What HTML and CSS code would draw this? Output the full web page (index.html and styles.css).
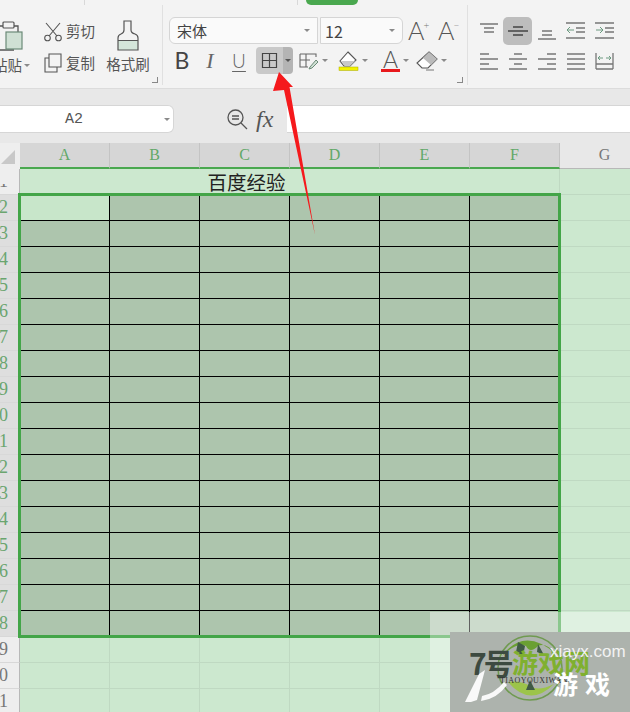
FILE: index.html
```html
<!DOCTYPE html>
<html lang="zh">
<head>
<meta charset="utf-8">
<title>表格</title>
<link rel="stylesheet" href="styles.css">
</head>
<body>
<div class="app">
  <div class="tabs">
    <span class="tab-line tl1"></span><span class="tab-line tl2"></span><span class="tab-pill"></span>
  </div>
  <div class="ribbon">
    <section class="grp clip">
      <div class="paste">
        <svg class="paste-ico" width="33" height="31" viewBox="0 0 33 31"><path d="M4 6h20v9M20 30H4V6" fill="none" stroke="#555" stroke-width="1.3"/><rect x="9" y="2" width="11" height="6" rx="1" fill="#f3f3f3" stroke="#555" stroke-width="1.2"/><rect x="12" y="12" width="16" height="17" fill="#cfe0d4" stroke="#6c8a78" stroke-width="1.2"/></svg>
        <div class="lbl paste-lbl">粘贴<i class="caret"></i></div>
      </div>
      <div class="cutcopy">
        <div class="cc-row">
          <svg width="20" height="20" viewBox="0 0 20 20"><path d="M3 1l11 13M17 1L6 14" stroke="#555" stroke-width="1.1" fill="none"/><circle cx="4.500" cy="16" r="2.800" fill="none" stroke="#555" stroke-width="1.100"/><circle cx="15.500" cy="16" r="2.800" fill="none" stroke="#555" stroke-width="1.100"/></svg>
          <span class="lbl">剪切</span>
        </div>
        <div class="cc-row">
          <svg width="20" height="20" viewBox="0 0 20 20"><path d="M6 1h12v13H6zM6 5H2v14h12v-5" fill="none" stroke="#555" stroke-width="1.100"/></svg>
          <span class="lbl">复制</span>
        </div>
      </div>
      <div class="painter">
        <svg width="24" height="31" viewBox="0 0 24 31"><path d="M2 20.500h20v9.500H2z" fill="#d4e6da"/><path d="M8 1h7v9q0 3 4 4 3 1 3 4v12H2V18q0-3 3-4 3-1 3-4zM2 20.500h20" fill="none" stroke="#555" stroke-width="1.200"/></svg>
        <div class="lbl">格式刷</div>
      </div>
      <i class="corner"></i>
    </section>

    <section class="grp font">
      <div class="f-row1">
        <div class="combo font-name"><span>宋体</span><i class="caret"></i></div>
        <div class="combo font-size"><span>12</span><i class="caret"></i></div>
        <span class="grow">A<sup>+</sup></span>
        <span class="grow">A<sup class="minus">−</sup></span>
      </div>
      <div class="f-row2">
        <span class="sty bold">B</span>
        <span class="sty ital">I</span>
        <span class="sty under">U</span>
        <div class="border-btn">
          <span class="bb-main"><svg width="17" height="17" viewBox="0 0 17 17"><path d="M1.500 1.500h14v14h-14zM8.500 1.500v14M1.500 8.500h14" fill="none" stroke="#444" stroke-width="1.200"/></svg></span>
          <span class="bb-drop"><i class="caret dark"></i></span>
        </div>
        <span class="tool t-cond"><svg width="20" height="18" viewBox="0 0 20 18"><path d="M1 2h16v3M1 2v13h8M1 8h10M7 2v13" fill="none" stroke="#666" stroke-width="1.100"/><path d="M11 15l6-7 2 2-6 6-3 1z" fill="#cfe0d4" stroke="#6c8a78"/></svg><i class="caret"></i></span>
        <span class="tool t-fill"><svg width="21" height="20" viewBox="0 0 21 20"><path d="M10 1l8 8-6 6H6L2 10z" fill="#fff" stroke="#555" stroke-width="1.100"/><path d="M3 10h14l-5 5H7z" fill="#c8c8c8"/><rect x="1" y="16" width="19" height="3.500" fill="#f2f200" stroke="#a8a800" stroke-width=".5"/></svg><i class="caret"></i></span>
        <span class="tool t-color"><span class="font-a">A</span><i class="caret"></i></span>
        <span class="tool t-erase"><svg width="22" height="20" viewBox="0 0 22 20"><path d="M13 1l8 7-9 9H6l-5-5z" fill="#fff" stroke="#555" stroke-width="1.100"/><path d="M13 1l8 7-6 6-8-7z" fill="#bbb"/><path d="M10 19h8" stroke="#777"/></svg><i class="caret"></i></span>
      </div>
      <i class="corner"></i>
    </section>

    <section class="grp align">
      <div class="a-row">
        <span class="ab"><svg width="18" height="18" viewBox="0 0 18 18"><path d="M0 2h18M4 6h10M4 10h10" stroke="#777" stroke-width="1.300"/></svg></span>
        <span class="ab on"><svg width="20" height="18" viewBox="0 0 20 18"><path d="M0 9h20M5 5h10M5 13h10" stroke="#444" stroke-width="1.300"/></svg></span>
        <span class="ab"><svg width="18" height="18" viewBox="0 0 18 18"><path d="M4 9h10M4 13h10M0 17h18" stroke="#777" stroke-width="1.300"/></svg></span>
        <span class="ab"><svg width="19" height="18" viewBox="0 0 19 18"><path d="M0 1h19M10 6h9M10 10h9M0 16h19" stroke="#777" stroke-width="1.300"/><path d="M8 8H1M4 5L1 8l3 3" fill="none" stroke="#6c9a80"/></svg></span>
        <span class="ab"><svg width="19" height="18" viewBox="0 0 19 18"><path d="M0 1h19M10 6h9M10 10h9M0 16h19" stroke="#777" stroke-width="1.300"/><path d="M1 8h7M5 5l3 3-3 3" fill="none" stroke="#6c9a80"/></svg></span>
      </div>
      <div class="a-row">
        <span class="ab"><svg width="18" height="18" viewBox="0 0 18 18"><path d="M0 2h9M0 7h18M0 12h9M0 17h18" stroke="#777" stroke-width="1.300"/></svg></span>
        <span class="ab"><svg width="18" height="18" viewBox="0 0 18 18"><path d="M5 2h8M0 7h18M5 12h8M0 17h18" stroke="#777" stroke-width="1.300"/></svg></span>
        <span class="ab"><svg width="18" height="18" viewBox="0 0 18 18"><path d="M9 2h9M0 7h18M9 12h9M0 17h18" stroke="#777" stroke-width="1.300"/></svg></span>
        <span class="ab"><svg width="18" height="18" viewBox="0 0 18 18"><path d="M0 2h18M0 7h18M0 12h18M0 17h18" stroke="#777" stroke-width="1.300"/></svg></span>
        <span class="ab"><svg width="19" height="18" viewBox="0 0 19 18"><path d="M1 1v16M18 1v16M1 12h17M1 17h17" stroke="#777" stroke-width="1.300"/><path d="M3 6h5M5 4L3 6l2 2M11 6h5M14 4l2 2-2 2" fill="none" stroke="#6c9a80"/></svg></span>
      </div>
    </section>
  </div>

  <div class="fbar">
    <div class="namebox"><span>A2</span><i class="caret"></i></div>
    <svg class="zoom-ico" width="22" height="22" viewBox="0 0 22 22"><circle cx="9.500" cy="9.500" r="7.500" fill="none" stroke="#555" stroke-width="1.300"/><path d="M15 15l6 6M6 8h7M6 11h7" stroke="#555" stroke-width="1.300"/></svg>
    <span class="fx">fx</span>
    <div class="finput"></div>
  </div>

  <div class="sheet">
    <div class="row head">
      <div class="rh corner-cell"><i class="tri"></i></div>
      <div class="ch">A</div><div class="ch">B</div><div class="ch">C</div><div class="ch">D</div><div class="ch">E</div><div class="ch">F</div><div class="ch last">G</div>
    </div>
    <div class="row r1">
      <div class="rh"><span class="clipped">1</span></div>
      <div class="title">百度经验</div>
      <div class="c"></div><div class="c wide"></div>
    </div>
    <div class="row"><div class="rh on">2</div><div class="t active"></div><div class="t"></div><div class="t"></div><div class="t"></div><div class="t"></div><div class="t"></div><div class="c wide"></div></div>
    <div class="row"><div class="rh on">3</div><div class="t"></div><div class="t"></div><div class="t"></div><div class="t"></div><div class="t"></div><div class="t"></div><div class="c wide"></div></div>
    <div class="row"><div class="rh on">4</div><div class="t"></div><div class="t"></div><div class="t"></div><div class="t"></div><div class="t"></div><div class="t"></div><div class="c wide"></div></div>
    <div class="row"><div class="rh on">5</div><div class="t"></div><div class="t"></div><div class="t"></div><div class="t"></div><div class="t"></div><div class="t"></div><div class="c wide"></div></div>
    <div class="row"><div class="rh on">6</div><div class="t"></div><div class="t"></div><div class="t"></div><div class="t"></div><div class="t"></div><div class="t"></div><div class="c wide"></div></div>
    <div class="row"><div class="rh on">7</div><div class="t"></div><div class="t"></div><div class="t"></div><div class="t"></div><div class="t"></div><div class="t"></div><div class="c wide"></div></div>
    <div class="row"><div class="rh on">8</div><div class="t"></div><div class="t"></div><div class="t"></div><div class="t"></div><div class="t"></div><div class="t"></div><div class="c wide"></div></div>
    <div class="row"><div class="rh on">9</div><div class="t"></div><div class="t"></div><div class="t"></div><div class="t"></div><div class="t"></div><div class="t"></div><div class="c wide"></div></div>
    <div class="row"><div class="rh on">10</div><div class="t"></div><div class="t"></div><div class="t"></div><div class="t"></div><div class="t"></div><div class="t"></div><div class="c wide"></div></div>
    <div class="row"><div class="rh on">11</div><div class="t"></div><div class="t"></div><div class="t"></div><div class="t"></div><div class="t"></div><div class="t"></div><div class="c wide"></div></div>
    <div class="row"><div class="rh on">12</div><div class="t"></div><div class="t"></div><div class="t"></div><div class="t"></div><div class="t"></div><div class="t"></div><div class="c wide"></div></div>
    <div class="row"><div class="rh on">13</div><div class="t"></div><div class="t"></div><div class="t"></div><div class="t"></div><div class="t"></div><div class="t"></div><div class="c wide"></div></div>
    <div class="row"><div class="rh on">14</div><div class="t"></div><div class="t"></div><div class="t"></div><div class="t"></div><div class="t"></div><div class="t"></div><div class="c wide"></div></div>
    <div class="row"><div class="rh on">15</div><div class="t"></div><div class="t"></div><div class="t"></div><div class="t"></div><div class="t"></div><div class="t"></div><div class="c wide"></div></div>
    <div class="row"><div class="rh on">16</div><div class="t"></div><div class="t"></div><div class="t"></div><div class="t"></div><div class="t"></div><div class="t"></div><div class="c wide"></div></div>
    <div class="row"><div class="rh on">17</div><div class="t"></div><div class="t"></div><div class="t"></div><div class="t"></div><div class="t"></div><div class="t"></div><div class="c wide"></div></div>
    <div class="row"><div class="rh on">18</div><div class="t"></div><div class="t"></div><div class="t"></div><div class="t"></div><div class="t"></div><div class="t"></div><div class="c wide"></div></div>
    <div class="row"><div class="rh">19</div><div class="c"></div><div class="c"></div><div class="c"></div><div class="c"></div><div class="c"></div><div class="c"></div><div class="c wide"></div></div>
    <div class="row"><div class="rh">20</div><div class="c"></div><div class="c"></div><div class="c"></div><div class="c"></div><div class="c"></div><div class="c"></div><div class="c wide"></div></div>
    <div class="row"><div class="rh">21</div><div class="c"></div><div class="c"></div><div class="c"></div><div class="c"></div><div class="c"></div><div class="c"></div><div class="c wide"></div></div>
    <div class="selbox"></div>
  </div>

  <svg class="arrow" width="50" height="170" viewBox="0 0 50 170"><path d="M9 2L23 17 19.500 17 45 165 14 20 3 21z" fill="#f5191c"/></svg>

  <div class="wm-veil"></div>
  <div class="wm">
    <svg class="wm-logo" width="72" height="72" viewBox="0 0 72 72"><circle cx="36" cy="36" r="32" fill="none" stroke="#6f9a50" stroke-width="1.500"/><path d="M8 24Q30-6 62 22 52 10 44 14 36 22 32 14 22 10 8 24z" fill="#6aa032"/><path d="M14 50q22 26 46 2-16 8-24 2-10-6-22-4z" fill="#9cc44a"/><path d="M24 10l-2 10 7 4 2-10zM44 12l-1 8 7 3zM32 58l4-10 5 10z" fill="#3f5a44"/></svg>
    <span class="wm-7">7号</span>
    <span class="wm-mid">游戏网</span>
    <span class="wm-url">xiayx.com</span>
    <span class="wm-pin">TIAOYOUXIWANG</span>
    <span class="wm-game">游戏</span>
    <svg class="wm-mark" width="44" height="36" viewBox="0 0 44 36"><path d="M1 34L15 6l6-4-8 30-6 2zM18 28q12-2 22-14l3 3q-10 14-26 16z" fill="#fff" opacity=".92"/></svg>
  </div>
</div>
</body>
</html>
```
FILE: styles.css
```css
* { box-sizing: border-box; }
html, body { margin: 0; padding: 0; }
body { width: 630px; height: 712px; overflow: hidden; background: #e8e8e8; font-family: "Noto Sans CJK SC", "Liberation Sans", sans-serif; color: #555; }
.app { position: relative; width: 630px; height: 712px; overflow: hidden; }
i { display: block; font-style: normal; }

.tabs { display: flex; height: 5px; background: #f3f3f3; }
.tab-line { width: 1px; height: 5px; background: #d8d8d8; }
.tl1 { margin-left: 84px; }
.tl2 { margin-left: 212px; }
.tab-pill { width: 52px; height: 5px; margin-left: 8px; background: #4aa84f; border-radius: 0 0 10px 10px; }

.ribbon { display: flex; height: 84px; background: #f3f3f3; border-bottom: 1px solid #dcdcdc; box-shadow: 0 1px 1px #dedede; }
.grp { position: relative; height: 80px; border-right: 1px solid #e0e0e0; }
.corner { position: absolute; right: 4px; bottom: 2px; width: 6px; height: 6px; border-right: 1px solid #888; border-bottom: 1px solid #888; }
.caret { width: 0; height: 0; border-left: 3.500px solid transparent; border-right: 3.500px solid transparent; border-top: 3.500px solid #8a8a8a; }
.caret.dark { border-top-color: #555; }
.lbl { font-size: 14.500px; line-height: 18px; color: #555; white-space: nowrap; }

.clip { display: flex; width: 163px; padding-top: 15px; }
.paste { width: 38px; margin-left: -7px; margin-right: 12px; flex: none; }
.paste-ico { display: block; margin-left: 1px; }
.paste-lbl { display: flex; align-items: center; gap: 2px; margin-top: 5px; }
.cutcopy { width: 63px; flex: none; display: flex; flex-direction: column; gap: 11px; margin-top: 2px; }
.cc-row { display: flex; align-items: center; gap: 3px; height: 20px; }
.cc-row:first-child .lbl { margin-top: -2px; }
.painter { width: 44px; flex: none; text-align: center; }
.painter svg { display: block; margin: 0 auto 4px; }
.painter .lbl { margin-top: 4px; }

.font { width: 305px; padding: 12px 0 0 6px; }
.f-row1 { display: flex; align-items: center; height: 27px; gap: 2px; }
.combo { display: flex; align-items: center; justify-content: space-between; height: 27px; padding: 0 7px; background: #fafafa; border: 1px solid #d5d5d5; font-size: 15px; color: #444; }
.font-name { width: 149px; border-radius: 6px 0 0 6px; }
.font-size { width: 83px; border-radius: 0 6px 6px 0; font-size: 16px; padding-left: 4px; }
.grow { width: 24px; margin-left: 3px; font: 300 25px/27px "Lato", sans-serif; color: #555; white-space: nowrap; }
.grow sup { font-size: 10px; line-height: 0; vertical-align: 11px; color: #777; margin-left: -1px; }
.grow + .grow { margin-left: 4px; }
.f-row2 { display: flex; align-items: center; height: 27px; margin-top: 3px; }
.sty { width: 28px; text-align: center; font-family: "Lato", sans-serif; font-size: 23px; line-height: 27px; color: #444; }
.bold { width: 26px; }
.ital { font-family: "Liberation Serif", serif; font-style: italic; color: #666; width: 30px; font-size: 22px; }
.under { text-decoration: underline; text-underline-offset: 3px; text-decoration-thickness: 1px; color: #666; font-size: 19px; width: 28px; font-weight: 300; }
.border-btn { display: flex; width: 37px; height: 27px; margin-left: 3px; border-radius: 4px; overflow: hidden; }
.bb-main { display: flex; align-items: center; justify-content: center; width: 27px; background: #c9c9c9; }
.bb-drop { display: flex; align-items: center; justify-content: center; width: 10px; background: #b4b4b4; }
.tool { display: flex; align-items: center; gap: 3px; }
.t-cond { margin-left: 6px; width: 37px; }
.t-fill { margin-left: 2px; width: 41px; }
.t-color { margin-left: 0; width: 36px; }
.t-erase { margin-left: 1px; width: 32px; }
.font-a { display: block; width: 19px; height: 23px; font: 300 23px/20px "Lato", sans-serif; text-align: center; color: #555; border-bottom: 3px solid #e8191c; margin-left: 2px; }

.align { flex: 1; border-right: 0; padding: 12px 0 0 6px; }
.a-row { display: flex; height: 28px; margin-bottom: 2px; }
.ab { display: flex; align-items: center; justify-content: center; width: 29px; height: 28px; border-radius: 5px; }
.ab.on { background: #bdbdbd; }

.fbar { display: flex; align-items: center; height: 54px; padding-top: 11px; padding-bottom: 5px; background: #e8e8e8; }
.namebox { display: flex; align-items: center; justify-content: space-between; flex: none; width: 174px; height: 28px; padding: 0 3px 0 65px; background: #fff; border: 1px solid #d6d6d6; border-left: 0; border-radius: 0 6px 6px 0; font: 15px "Liberation Mono", monospace; color: #555; }
.zoom-ico { flex: none; margin-left: 52px; }
.fx { flex: none; width: 30px; margin-left: 8px; font: italic 24px "Liberation Serif", serif; color: #555; }
.finput { flex: 1; height: 28px; margin-left: 1px; background: #fff; border-top: 1px solid #d6d6d6; border-bottom: 1px solid #d6d6d6; }

.sheet { position: relative; }
.row { display: flex; height: 26px; }
.rh { flex: none; width: 20px; padding-right: 11px; overflow: hidden; display: flex; justify-content: flex-end; background: #eeeeee; border-right: 1px solid #b8b8b8; border-bottom: 1px solid #d8d8d8; font: 18px/25px "Liberation Serif", serif; color: #777; }
.rh.on { color: #6aa56f; background: #dedede; }
.clipped { display: block; height: 25px; clip-path: inset(15px 0 0 0); }
.corner-cell { position: relative; border-bottom: 0; border-right: 0; }
.tri { position: absolute; left: 1px; top: 7px; width: 0; height: 0; border-left: 14px solid transparent; border-bottom: 14px solid #c8c8c8; }
.ch { flex: none; width: 90px; text-align: center; background: #d6d6d6; border-right: 1px solid #c4c4c4; border-bottom: 2px solid #4aa84f; font: 16px/24px "Liberation Serif", serif; color: #62a868; }
.ch.last { background: #e8e8e8; color: #777; border-bottom-color: #b8b8b8; border-bottom-width: 1px; }
.title { flex: none; width: 450px; text-align: center; background: #cce8cf; font: 400 19.500px/25px "Noto Sans CJK SC", sans-serif; color: #222; border-bottom: 1px solid #bcd5bf; padding-left: 3px; }
.c { flex: none; width: 90px; background: #cce8cf; border-right: 1px solid #bfd9c2; border-bottom: 1px solid #bfd9c2; }
.c.wide { border-right: 0; }
.t { flex: none; width: 90px; background: #adc5ad; border-right: 1px solid #000; border-bottom: 1px solid #000; }
.t.active { background: #c8e6ca; }
.selbox { position: absolute; left: 18px; top: 50px; width: 543px; height: 445px; border: 3px solid #43a548; pointer-events: none; }

.arrow { position: absolute; left: 270px; top: 70px; }

.wm-veil { position: absolute; left: 430px; top: 612px; width: 200px; height: 100px; background: rgba(255,255,255,.38); }
.wm { position: absolute; left: 450px; top: 632px; width: 180px; height: 80px; background: #adb3ad; overflow: hidden; }
.wm span { position: absolute; white-space: nowrap; }
.wm-logo { position: absolute; left: 44px; top: 0; }
.wm-7 { left: 19px; top: 12px; font: 700 30px/36px "Noto Sans CJK SC", sans-serif; letter-spacing: -3px; color: #3d4a40; }
.wm-mid { left: 62px; top: 14px; font: 700 26px/32px "Noto Sans CJK SC", sans-serif; color: #7fb02f; }
.wm-url { left: 100px; top: 9px; font: 17px/22px "Liberation Sans", sans-serif; color: #f2f2f2; }
.wm-pin { left: 50px; top: 44px; font: 8px/10px "Liberation Serif", serif; color: #333; letter-spacing: .4px; }
.wm-game { left: 103px; top: 34px; font: 700 25px/34px "Noto Sans CJK SC", sans-serif; color: #fff; letter-spacing: 7px; }
.wm-mark { position: absolute; left: 14px; top: 36px; }
```
